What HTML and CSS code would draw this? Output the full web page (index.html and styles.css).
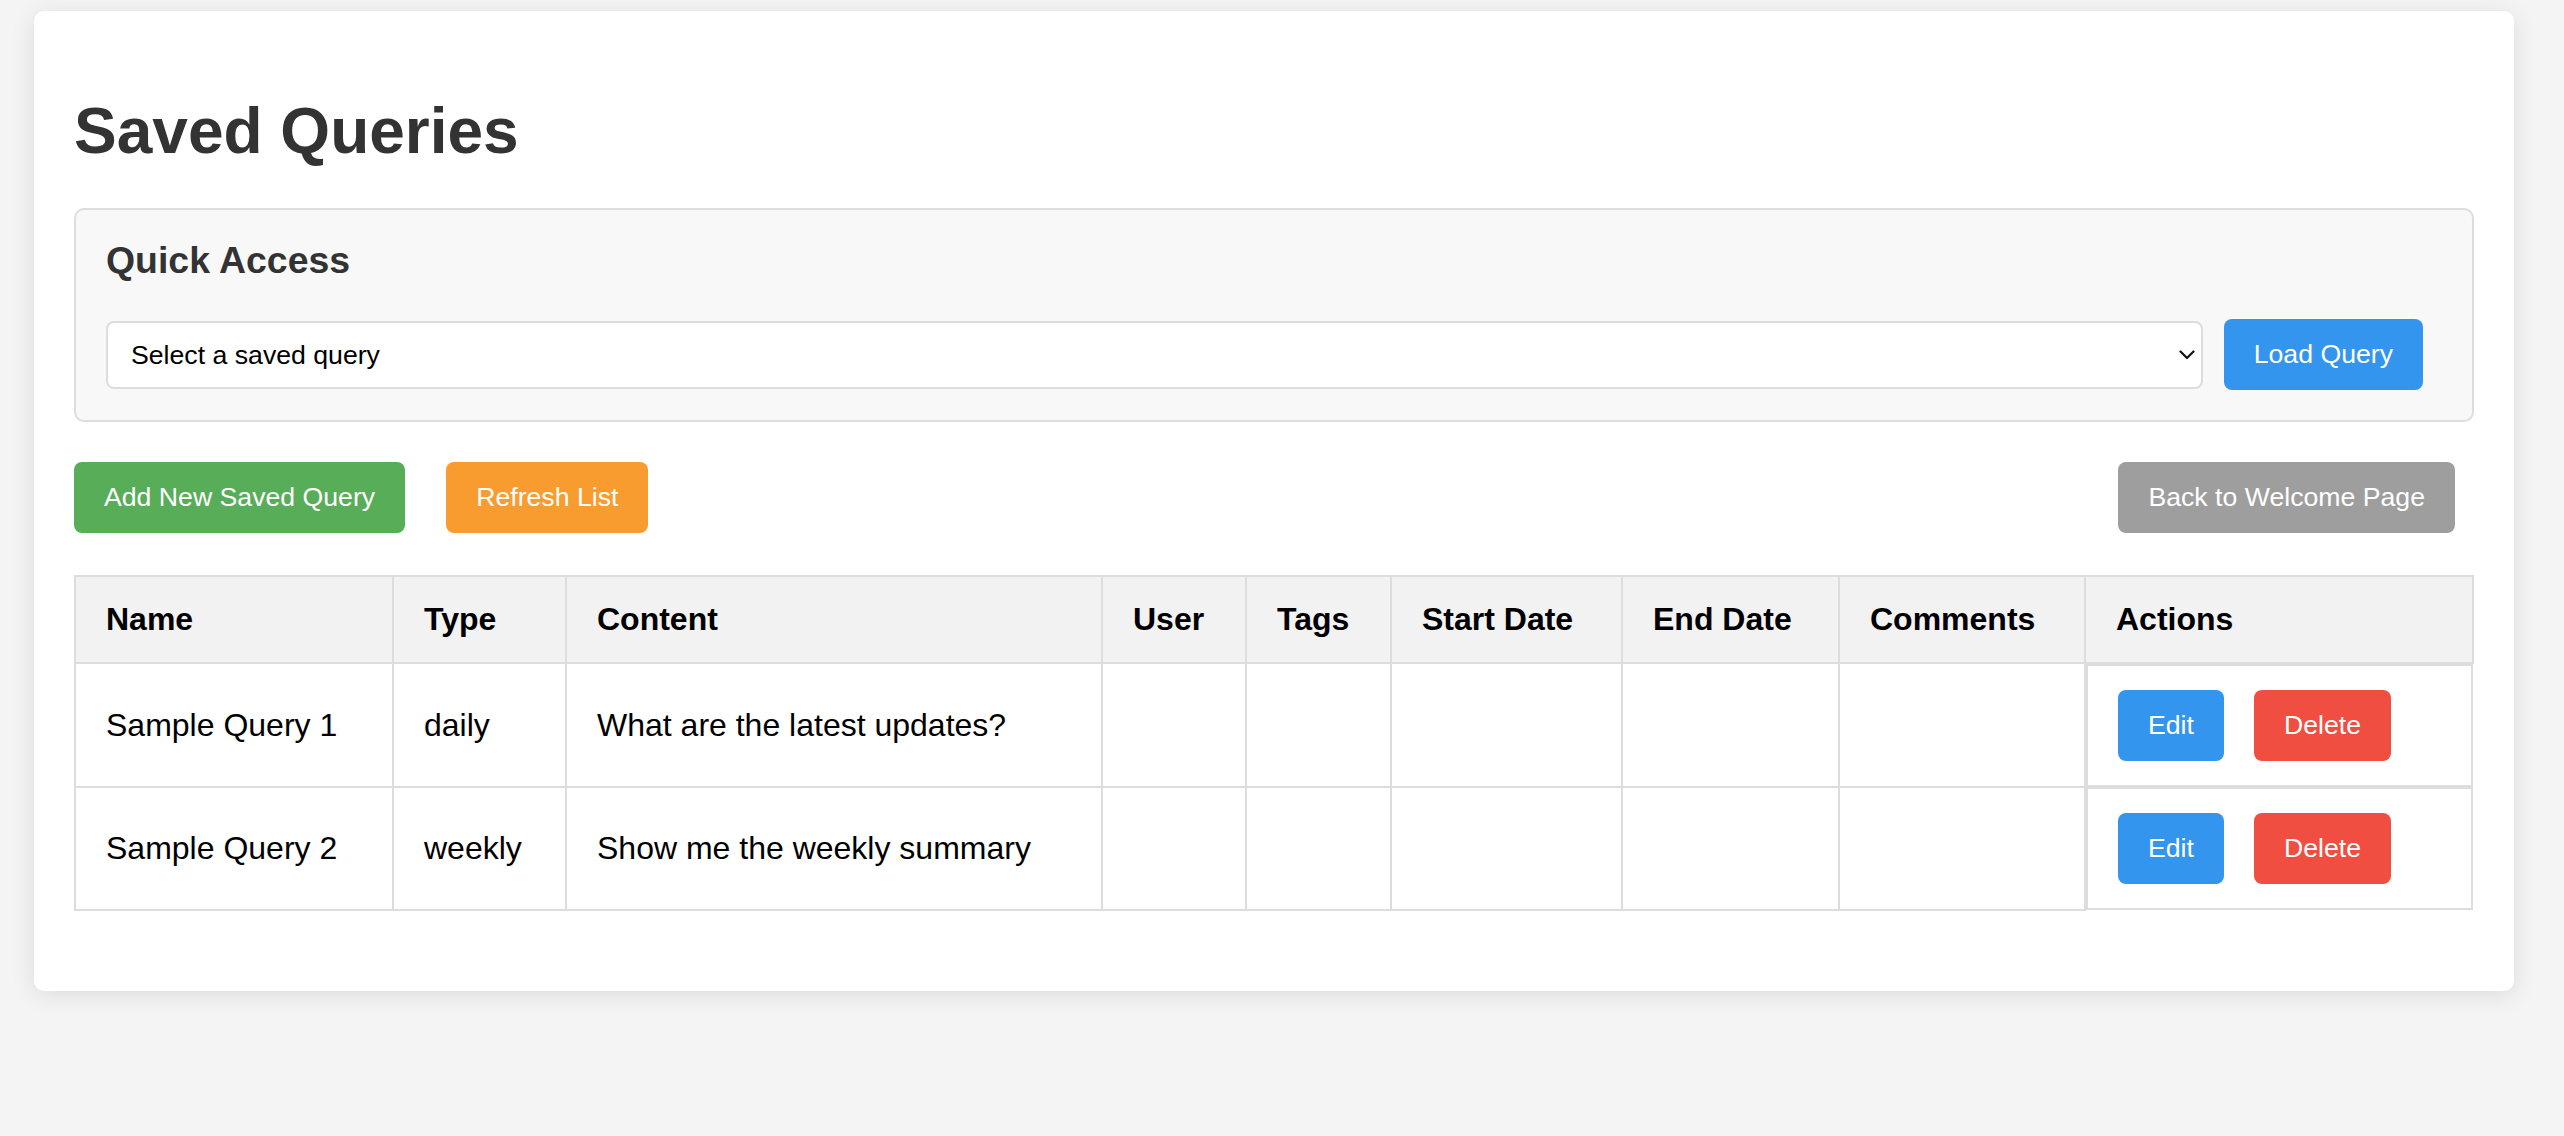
FILE: index.html
```html
<!DOCTYPE html>
<html lang="en">
<head>
<meta charset="utf-8">
<title>Saved Queries</title>
<link rel="stylesheet" href="styles.css">
</head>
<body>
<div class="container">
  <h1 class="title">Saved Queries</h1>

  <section class="quick">
    <h3 class="quick-title">Quick Access</h3>
    <div class="quick-row">
      <div class="select-wrap">
        <select class="select">
          <option>Select a saved query</option>
        </select>
        <svg class="chevron" width="16" height="10" viewBox="0 0 16 10" aria-hidden="true">
          <path d="M1.5 1.5 L8 8 L14.5 1.5" fill="none" stroke="#111" stroke-width="2.2" stroke-linecap="round" stroke-linejoin="round"/>
        </svg>
      </div>
      <button class="btn btn-blue btn-load">Load Query</button>
    </div>
  </section>

  <div class="toolbar">
    <div class="toolbar-left">
      <button class="btn btn-green">Add New Saved Query</button>
      <button class="btn btn-orange">Refresh List</button>
    </div>
    <button class="btn btn-grey btn-back">Back to Welcome Page</button>
  </div>

  <table class="queries">
    <colgroup>
      <col class="col-name">
      <col class="col-type">
      <col class="col-content">
      <col class="col-user">
      <col class="col-tags">
      <col class="col-start">
      <col class="col-end">
      <col class="col-comments">
      <col class="col-actions">
    </colgroup>
    <thead>
      <tr>
        <th>Name</th>
        <th>Type</th>
        <th>Content</th>
        <th>User</th>
        <th>Tags</th>
        <th>Start Date</th>
        <th>End Date</th>
        <th>Comments</th>
        <th>Actions</th>
      </tr>
    </thead>
    <tbody>
      <tr>
        <td>Sample Query 1</td>
        <td>daily</td>
        <td>What are the latest updates?</td>
        <td></td>
        <td></td>
        <td></td>
        <td></td>
        <td></td>
        <td class="actions">
          <button class="btn btn-blue">Edit</button>
          <button class="btn btn-red">Delete</button>
        </td>
      </tr>
      <tr>
        <td>Sample Query 2</td>
        <td>weekly</td>
        <td>Show me the weekly summary</td>
        <td></td>
        <td></td>
        <td></td>
        <td></td>
        <td></td>
        <td class="actions">
          <button class="btn btn-blue">Edit</button>
          <button class="btn btn-red">Delete</button>
        </td>
      </tr>
    </tbody>
  </table>
</div>
</body>
</html>
```

FILE: styles.css
```css
* {
  box-sizing: border-box;
}

html, body {
  margin: 0;
  padding: 0;
}

body {
  background: #f4f4f4;
  font-family: "Liberation Sans", Arial, Helvetica, sans-serif;
  font-size: 32px;
  color: #000;
  padding: 11px 34px 40px;
}

.container {
  width: 2480px;
  background: #fff;
  border-radius: 10px;
  box-shadow: 0 4px 24px rgba(0, 0, 0, 0.1);
  padding: 40px;
}

.title {
  font-size: 64px;
  font-weight: bold;
  color: #333;
  margin: 43px 0 40px;
  line-height: normal;
}

.quick {
  background: #f8f8f8;
  border: 2px solid #dddddd;
  border-radius: 10px;
  padding: 29px 30px 30px;
  margin-bottom: 40px;
}

.quick-title {
  font-size: 37.44px;
  font-weight: bold;
  color: #333;
  margin: 0 0 37px;
  line-height: normal;
}

.quick-row {
  display: flex;
  align-items: center;
}

.select-wrap {
  position: relative;
  flex: 1;
}

.select {
  display: block;
  width: 100%;
  height: 68px;
  -webkit-appearance: none;
  appearance: none;
  background: #fff;
  border: 2px solid #dddddd;
  border-radius: 8px;
  padding: 0 40px 0 23px;
  font-family: "Liberation Sans", Arial, sans-serif;
  font-size: 26.67px;
  color: #000;
}

.chevron {
  position: absolute;
  right: 8px;
  top: 29px;
  pointer-events: none;
}

.btn {
  border: none;
  border-radius: 8px;
  padding: 20px 30px;
  font-family: "Liberation Sans", Arial, sans-serif;
  font-size: 26.67px;
  line-height: normal;
  color: #fff;
  cursor: pointer;
  white-space: nowrap;
}

.btn-blue { background: #3395ee; }
.btn-green { background: #58ad58; }
.btn-orange { background: #f99c30; }
.btn-grey { background: #9e9e9e; }
.btn-red { background: #ef4e41; }

.btn-load {
  margin-left: 21px;
  margin-right: 19px;
}

.toolbar {
  display: flex;
  justify-content: space-between;
  align-items: center;
  margin-bottom: 42px;
}

.toolbar-left {
  display: flex;
  gap: 41px;
}

.btn-back {
  margin-right: 19px;
}

.queries {
  width: 100%;
  border-collapse: collapse;
  table-layout: fixed;
  margin-bottom: 40px;
}

.col-name { width: 318px; }
.col-type { width: 173px; }
.col-user { width: 144px; }
.col-tags { width: 145px; }
.col-start { width: 231px; }
.col-end { width: 217px; }
.col-comments { width: 246px; }
.col-actions { width: 388px; }

.queries th,
.queries td {
  border: 2px solid #dddddd;
  padding: 24px 30px;
  text-align: left;
  font-size: 32px;
  line-height: normal;
  white-space: nowrap;
}

.queries th {
  background: #f2f2f2;
  font-weight: bold;
}

.queries td.actions {
  display: flex;
  gap: 30px;
  background: #fff;
}
```
